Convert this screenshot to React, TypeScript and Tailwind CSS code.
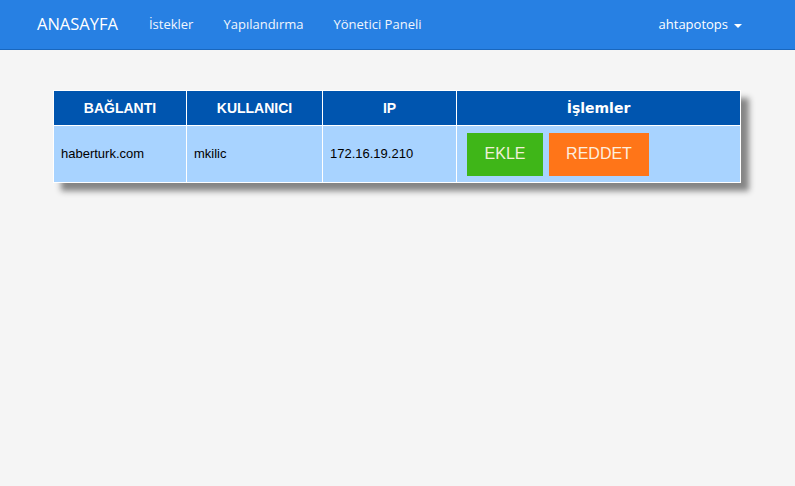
import React from 'react';

const links = ['İstekler', 'Yapılandırma', 'Yönetici Paneli'];

const rows = [{ url: 'haberturk.com', user: 'mkilic', ip: '172.16.19.210' }];

const App = () => {
  return (
    <div className="min-h-[486px] bg-[#f5f5f5]" style={{ fontFamily: '"Open Sans", sans-serif' }}>
      <nav className="flex h-[50px] items-center border-b border-[#1967be] bg-[#2780e3] px-[22px] text-white">
        <span className="px-[15px] text-[16.5px]">ANASAYFA</span>
        <ul className="flex pl-[1px]">
          {links.map((l) => (
            <li key={l} className="px-[15px] text-[13px] text-[#f1f6fd]">{l}</li>
          ))}
        </ul>
        <div className="ml-auto flex items-center gap-[6px] pr-[31px] text-[13px]">
          ahtapotops
          <span className="mt-[2px] h-0 w-0 border-x-[4px] border-t-[4px] border-x-transparent border-t-white" />
        </div>
      </nav>

      <div className="px-[53px] pt-[40px]">
        <table
          className="w-[688px] border-collapse border border-white text-[13px] shadow-[8px_8px_6px_#858585]"
          style={{ fontFamily: '"Liberation Sans", Arial, sans-serif' }}
        >
          <thead>
            <tr className="h-[35px] bg-[#0055af] text-[14px] font-bold text-white">
              <th className="w-[133px] border border-white">BAĞLANTI</th>
              <th className="w-[136px] border border-white">KULLANICI</th>
              <th className="w-[134px] border border-white">IP</th>
              <th className="border border-white" style={{ fontFamily: '"DejaVu Sans", sans-serif', fontSize: 14 }}>İşlemler</th>
            </tr>
          </thead>
          <tbody>
            {rows.map((r) => (
              <tr key={r.url} className="h-[57px] bg-[#a8d3ff] text-black">
                <td className="border border-white px-[7px]">{r.url}</td>
                <td className="border border-white px-[7px]">{r.user}</td>
                <td className="border border-white px-[7px]">{r.ip}</td>
                <td className="border border-white px-[10px]">
                  <div className="flex gap-[6px]">
                    <button type="button" className="h-[43px] w-[76px] bg-[#3fb618] text-[16px] text-[#f0f0d8]">EKLE</button>
                    <button type="button" className="h-[43px] w-[100px] bg-[#ff7518] text-[16px] text-[#fdeede]">REDDET</button>
                  </div>
                </td>
              </tr>
            ))}
          </tbody>
        </table>
      </div>
    </div>
  );
};

export default App;
